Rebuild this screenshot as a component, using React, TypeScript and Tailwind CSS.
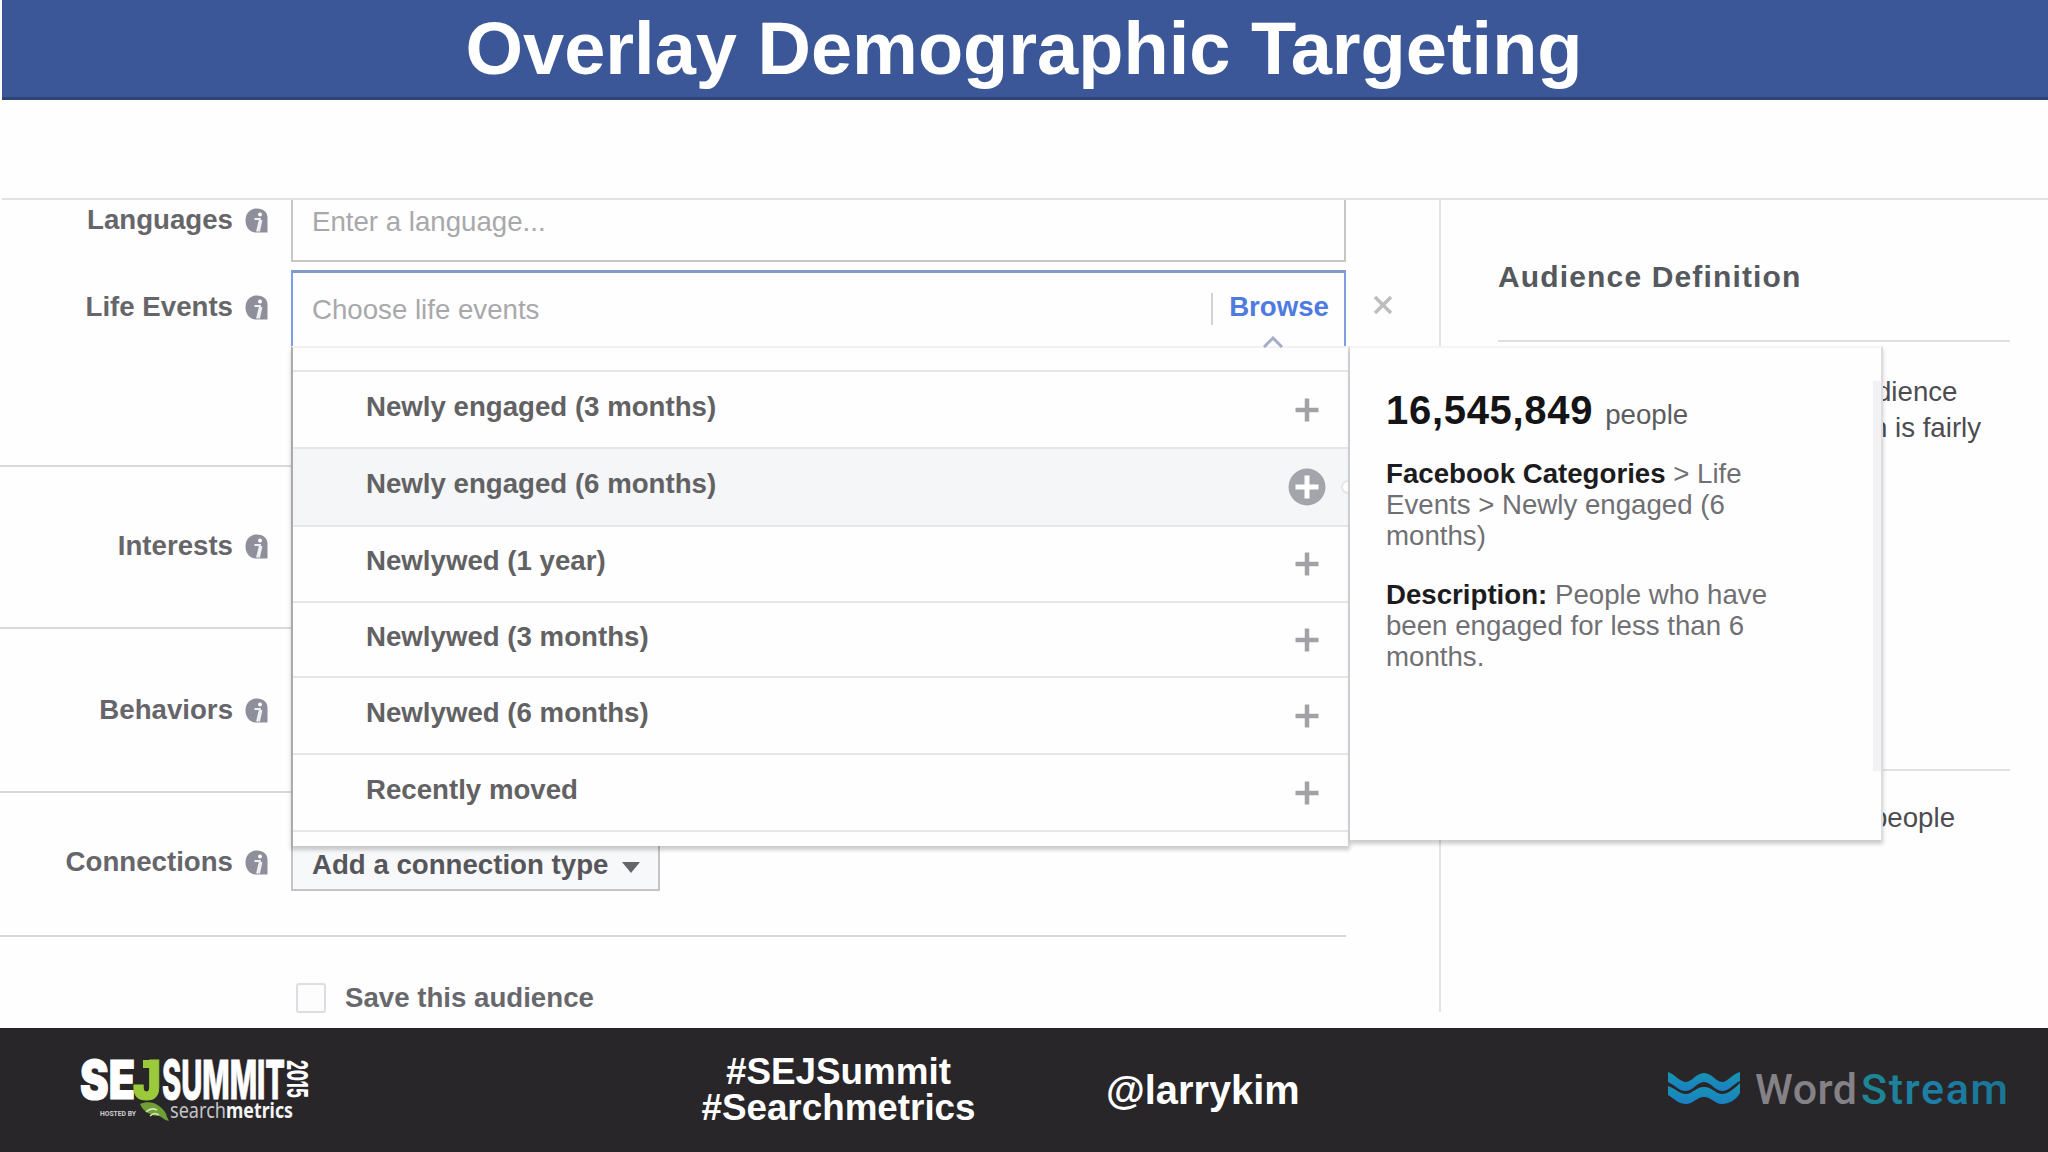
import { clsx } from "clsx";

type LifeEvent = {
  label: string;
  height: string;
  active?: boolean;
};

const lifeEvents: LifeEvent[] = [
  { label: "Newly engaged (3 months)", height: "h-[77px]" },
  { label: "Newly engaged (6 months)", height: "h-[78px]", active: true },
  { label: "Newlywed (1 year)", height: "h-[76px]" },
  { label: "Newlywed (3 months)", height: "h-[75px]" },
  { label: "Newlywed (6 months)", height: "h-[77px]" },
  { label: "Recently moved", height: "h-[77px]" },
];

function InfoIcon() {
  return (
    <svg width="23" height="25" viewBox="0 0 23 25" className="shrink-0" aria-hidden="true">
      <path d="M22.5 24.5H10C4 24 .5 18.500.5 12.500.5 5.500 5 .5 12 .5c6.500 0 10.500 4 10.500 9z" fill="#8f8f9b" />
      <circle cx="15" cy="6.500" r="2" fill="#fff" />
      <path d="M9.500 11h5.500L12 23.500M16.500 12L14 23.500" fill="none" stroke="#f0f0f5" strokeWidth="1.800" />
    </svg>
  );
}

function PlusIcon({ active }: { active?: boolean }) {
  return (
    <svg width="38" height="38" viewBox="0 0 38 38" className="shrink-0" aria-hidden="true">
      {active && <circle cx="19" cy="19" r="18.500" fill="#a3a5ab" />}
      <path d="M19 7.500v23M7.500 19h23" stroke={active ? "#fff" : "#a2a2a6"} strokeWidth={active ? 5 : 4.5} />
    </svg>
  );
}

function FieldLabel({ children, className }: { children: string; className?: string }) {
  return (
    <div className={clsx("flex h-8 w-[291px] shrink-0 items-center justify-end gap-3 pr-[23px] font-bold text-[#66666a]", className)}>
      <span className="leading-8">{children}</span>
      <InfoIcon />
    </div>
  );
}

function SejLogo() {
  return (
    <svg width="232" height="82" viewBox="0 -8 232 82" role="img" aria-label="SEJ Summit 2015">
      <g fontFamily="Inter, Roboto, sans-serif">
        <text x="0" y="42" fontSize="53" fontWeight="900" fill="#fff" stroke="#fff" strokeWidth="1.200" textLength="55" lengthAdjust="spacingAndGlyphs">SE</text>
        <path d="M63 3h13v8H63z" fill="#9aca3c" />
        <text x="53" y="42" fontSize="53" fontWeight="900" fill="#9aca3c" stroke="#9aca3c" strokeWidth="1" textLength="28" lengthAdjust="spacingAndGlyphs">J</text>
        <text x="82" y="42" fontSize="53" fontWeight="800" fill="#fff" stroke="#fff" strokeWidth="0.800" textLength="123" lengthAdjust="spacingAndGlyphs">SUMMIT</text>
        <text transform="translate(207 3) rotate(90)" x="0" y="0" fontSize="28" fontWeight="800" fill="#fff" textLength="38" lengthAdjust="spacingAndGlyphs">2015</text>
      </g>
      <text x="20" y="59" fontSize="8" fontWeight="700" fontFamily="Roboto, sans-serif" fill="#d0d0d2" textLength="36" lengthAdjust="spacingAndGlyphs">HOSTED BY</text>
      <path d="M60 47c6-3 15-2 19 2 4 3 7 6 8 11l2 4c-5-1-7-4-10-5-7 0-16-4-19-12z" fill="#6f9f35" />
      <path d="M66 55c3-3 7-4 11-2M70 59c3-3 6-3 9-1" fill="none" stroke="#d5e6b4" strokeWidth="1.500" />
      <g fontFamily="'Noto Sans', sans-serif" fontSize="22">
        <text x="90" y="61" fill="#c4c4c6" fontWeight="400" textLength="56" lengthAdjust="spacingAndGlyphs">search</text>
        <text x="146" y="61" fontWeight="700" fill="#f4f4f4" textLength="67" lengthAdjust="spacingAndGlyphs">metrics</text>
      </g>
    </svg>
  );
}

function WordStreamLogo() {
  return (
    <svg width="342" height="60" viewBox="0 -5 342 60" role="img" aria-label="WordStream">
      <defs>
        <linearGradient id="stream" x1="0" y1="0" x2="1" y2="0">
          <stop offset="0" stopColor="#1d8792" />
          <stop offset="0.500" stopColor="#1c7ea8" />
          <stop offset="1" stopColor="#1a7593" />
        </linearGradient>
        <linearGradient id="wave" x1="0" y1="0" x2="0" y2="1">
          <stop offset="0" stopColor="#1796b0" />
          <stop offset="1" stopColor="#1a7fc4" />
        </linearGradient>
      </defs>
      <g fill="url(#wave)">
        <path d="M1 7c8 3 12 10 18 10s10-9 18-9 12 9 18 9 10-8 18-10v9c-8 4-11 10-18 10s-11-9-18-9-11 9-18 9S9 21 1 17z" />
        <path d="M1 21c8 3 12 8 18 8s10-7 18-7 12 7 18 7 12-5 18-11v10c-4 7-11 11-18 11s-11-7-18-7-11 7-18 7S9 35 1 30z" />
      </g>
      <g fontFamily="Roboto, sans-serif" fontSize="43" fontWeight="500">
        <text x="88" y="39" fill="#848287" textLength="102" lengthAdjust="spacing">Word</text>
        <text x="194" y="39" fill="url(#stream)" textLength="147" lengthAdjust="spacing">Stream</text>
      </g>
    </svg>
  );
}

function LifeEventsMenu() {
  return (
    <div className="absolute -left-[2px] top-[73px] z-10 h-[500px] w-[1059px] border-t-2 border-r-2 border-l-2 border-t-[#f1f1f3] border-r-[#dcdce0] border-l-[#aaaaac] bg-[#fefefe] shadow-[0_4px_4px_rgba(0,0,0,0.2)]">
      <ul className="mt-[22px] border-b-2 border-[#e6e6e9]">
        {lifeEvents.map((event) => (
          <li
            key={event.label}
            className={clsx(
              "relative flex items-center justify-between overflow-hidden border-t-2 border-[#e6e6e9] pr-[22px] pl-[73px]",
              event.height,
              event.active && "bg-[#f5f6f7]"
            )}
          >
            <span className="pb-[6px] font-bold text-[#626264]">{event.label}</span>
            <PlusIcon active={event.active} />
            {event.active && <span className="absolute top-[31px] -right-[7px] h-[14px] w-[14px] rounded-full border-2 border-[#e6e6e9] bg-white" />}
          </li>
        ))}
      </ul>
    </div>
  );
}

function EventDetails() {
  return (
    <div className="absolute top-[73px] left-[1057px] z-20 h-[494px] w-[533px] border-t-2 border-r-2 border-t-[#f5f5f7] border-r-[#dddde0] bg-[#fefefe] pt-[42px] pl-[36px] text-[#707074] shadow-[0_4px_4px_rgba(0,0,0,0.2)]">
      <div className="absolute top-[33px] right-0 h-[390px] w-[8px] bg-[#f2f1f4]" />
      <p className="h-10 leading-10">
        <span className="text-[40px] font-bold tracking-[0.7px] text-[#141416]">16,545,849</span>
        <span className="ml-[12px] text-[#5c5c60]">people</span>
      </p>
      <p className="mt-[28px] w-[390px] leading-[31px]">
        <b className="text-[#1c1c1f]">Facebook Categories</b> &gt; Life Events &gt; Newly engaged (6 months)
      </p>
      <p className="mt-[28px] w-[390px] leading-[31px]">
        <b className="text-[#1c1c1f]">Description:</b> People who have been engaged for less than 6 months.
      </p>
    </div>
  );
}

function TargetingForm() {
  return (
    <div className="w-[1346px]">
      <section className="h-[267px] border-b-2 border-[#d9d9dc]">
        <div className="flex">
          <FieldLabel className="mt-[4px]">Languages</FieldLabel>
          <div className="h-[62px] flex-1 border-x-2 border-b-2 border-[#c6c6c8] pt-[6px] pl-[19px] leading-8 text-[#a8a8ab]">
            Enter a language...
          </div>
        </div>
        <div className="mt-2 flex">
          <FieldLabel className="mt-[21px]">Life Events</FieldLabel>
          <div className="relative flex h-[76px] flex-1 items-center border-x-2 border-t-[3px] border-x-[#7f9fe0] border-t-[#8199c8] pr-[15px] pl-[19px]">
            <span className="flex-1 text-[#a8a8ab]">Choose life events</span>
            <span className="mr-4 mb-[2px] h-8 w-[2px] bg-[#d3d3dc]" />
            <span className="pb-[5px] font-bold text-[#4f7be0]">Browse</span>
            <svg width="22" height="12" viewBox="0 0 22 12" className="absolute right-[60px] -bottom-[2px] z-20" aria-hidden="true">
              <path d="M2 11l9-9 9 9" fill="none" stroke="#a5acc8" strokeWidth="3" />
            </svg>
            <svg width="20" height="20" viewBox="0 0 20 20" className="absolute top-[22px] -right-[49px]" aria-label="Remove">
              <path d="M2 2l16 16M18 2L2 18" stroke="#bdbdbf" strokeWidth="3.500" />
            </svg>
            <LifeEventsMenu />
            <EventDetails />
          </div>
        </div>
      </section>
      <section className="h-[162px] border-b-2 border-[#d9d9dc] pt-[63px]">
        <FieldLabel>Interests</FieldLabel>
      </section>
      <section className="h-[164px] border-b-2 border-[#d9d9dc] pt-[65px]">
        <FieldLabel>Behaviors</FieldLabel>
      </section>
      <section className="flex h-[144px] border-b-2 border-[#d9d9dc]">
        <FieldLabel className="mt-[53px]">Connections</FieldLabel>
        <button className="mt-[40px] flex h-[58px] w-[369px] items-center border-2 border-[#c4c4c6] bg-[#f7f8f9] pt-[5px] pl-[19px] font-bold text-[#56565a]">
          <span>Add a connection type</span>
          <svg width="18" height="11" viewBox="0 0 20 12" className="mt-[6px] ml-[14px]" aria-hidden="true">
            <path d="M0 0h20L10 12z" fill="#66666a" />
          </svg>
        </button>
      </section>
      <label className="mt-[45px] ml-[296px] flex h-8 items-center gap-[19px] font-bold text-[#68686c]">
        <span className="h-[30px] w-[30px] rounded-[3px] border-2 border-[#dedee2] bg-[#fdfdfe]" />
        Save this audience
      </label>
    </div>
  );
}

function AudienceSidebar() {
  return (
    <aside className="ml-[57px] w-[512px] text-[#4c4c50]">
      <h2 className="h-[142px] border-b-2 border-[#dfdfe2] pt-[61px] text-[30px] leading-8 font-bold tracking-[1.150px] text-[#55585c]">
        Audience Definition
      </h2>
      <div className="h-[429px] border-b-2 border-[#e2e2e5] pt-[32px] leading-9">
        <p className="pl-[378px]">dience</p>
        <p className="pl-[374px]">n is fairly</p>
      </div>
      <p className="mt-[31px] pl-[374px] leading-8">people</p>
    </aside>
  );
}

export default function App() {
  return (
    <div className="flex h-[1152px] w-[2048px] flex-col overflow-hidden bg-[#fefefe] font-['Liberation_Sans',Arial,sans-serif] text-[27.65px]">
      <header className="ml-[2px] flex h-[100px] shrink-0 items-center justify-center border-b-[3px] border-[#2c4575] bg-[#3b5797] pt-px pr-[2px] text-white">
        <h1 className="text-[74px] leading-none font-bold">Overlay Demographic Targeting</h1>
      </header>

      <main className="mt-[98px] ml-[2px] flex h-[830px] shrink-0 border-t-2 border-[#e2e2e5]">
        <div className="-ml-[2px] h-[812px] w-[1441px] shrink-0 border-r-2 border-[#e4e4e8]">
          <TargetingForm />
        </div>
        <AudienceSidebar />
      </main>

      <footer className="flex h-[124px] shrink-0 items-center bg-[#282629] font-bold text-white">
        <div className="w-[670px] pl-[80px]">
          <SejLogo />
        </div>
        <p className="w-[337px] text-center text-[36.800px] leading-[36px]">
          #SEJSummit
          <br />
          #Searchmetrics
        </p>
        <p className="ml-[99px] w-[561px] text-[39.800px] leading-10">@larrykim</p>
        <WordStreamLogo />
      </footer>
    </div>
  );
}
